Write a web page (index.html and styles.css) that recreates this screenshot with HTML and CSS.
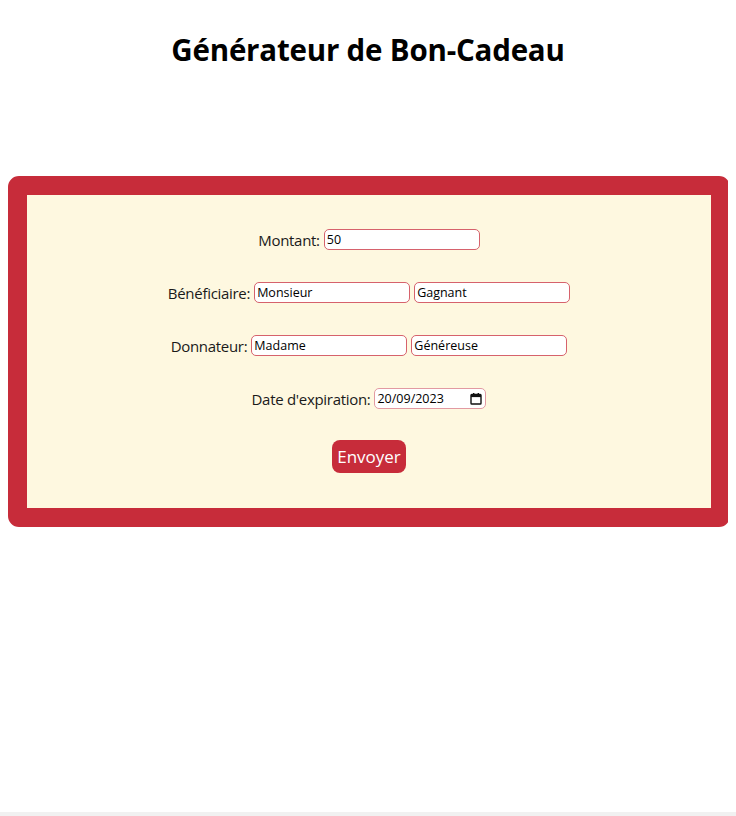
FILE: index.html
```html
<!DOCTYPE html>
<html lang="fr">
<head>
<meta charset="utf-8">
<title>Générateur de Bon-Cadeau</title>
<link rel="stylesheet" href="styles.css">
</head>
<body>
<h1 class="title">Générateur de Bon-Cadeau</h1>
<form class="voucher">
  <div class="row">
    <label class="lbl" for="montant">Montant:</label>
    <input class="field" id="montant" type="text" value="50">
  </div>
  <div class="row">
    <label class="lbl" for="ben1">Bénéficiaire:</label>
    <input class="field" id="ben1" type="text" value="Monsieur">
    <input class="field" type="text" value="Gagnant">
  </div>
  <div class="row">
    <label class="lbl" for="don1">Donnateur:</label>
    <input class="field" id="don1" type="text" value="Madame">
    <input class="field" type="text" value="Généreuse">
  </div>
  <div class="row">
    <label class="lbl" for="date">Date d'expiration:</label>
    <span class="datebox">
      <input class="datetext" id="date" type="text" value="20/09/2023">
      <svg class="cal" width="12" height="12" viewBox="0 0 12 12" aria-hidden="true">
        <rect x="1" y="1.5" width="10" height="9.5" rx="0.8" fill="none" stroke="#111" stroke-width="1.4"/>
        <rect x="1" y="1.5" width="10" height="2.6" fill="#111"/>
        <rect x="3" y="0" width="1.4" height="2" fill="#111"/>
        <rect x="7.6" y="0" width="1.4" height="2" fill="#111"/>
      </svg>
    </span>
  </div>
  <div class="row actions">
    <button class="send" type="button">Envoyer</button>
  </div>
</form>
<div class="hbar"></div>
</body>
</html>
```
FILE: styles.css
```css
html, body {
  background: #ffffff;
}
body {
  margin: 8px;
  font-family: "Open Sans", "Noto Sans", sans-serif;
  color: #111;
}
.title {
  margin: 22px 0 0;
  text-align: center;
  font-size: 29.5px;
  font-weight: 700;
  line-height: 40px;
  color: #000;
  letter-spacing: -0.2px;
}
.voucher {
  margin: 106px -2px 0 0;
  background: #fef8e0;
  border: 19px solid #c72c3a;
  border-radius: 11px;
  padding: 34px 0 35px;
  display: flex;
  flex-direction: column;
  align-items: center;
  gap: 32px;
}
.row {
  display: flex;
  align-items: center;
  justify-content: center;
  height: 21px;
  gap: 4px;
}
.lbl {
  font-size: 15px;
  color: #1a1a1a;
  letter-spacing: -0.3px;
}
.field {
  box-sizing: border-box;
  width: 156px;
  height: 21px;
  margin: 0;
  padding: 1px 2px;
  border: 1px solid #d6626c;
  border-radius: 5px;
  background: #fff;
  font-family: "Open Sans", "Noto Sans", sans-serif;
  font-size: 12.5px;
  color: #000;
  outline: none;
}
.datebox {
  box-sizing: border-box;
  width: 112px;
  height: 21px;
  display: flex;
  align-items: center;
  border: 1px solid #e29aa2;
  border-radius: 5px;
  background: #fff;
  padding: 0 3px 0 2px;
}
.datetext {
  flex: 1;
  min-width: 0;
  border: 0;
  padding: 0;
  margin: 0;
  background: transparent;
  font-family: "Open Sans", "Noto Sans", sans-serif;
  font-size: 12.5px;
  color: #000;
  outline: none;
}
.cal {
  flex: none;
}
.actions {
  height: 33px;
  margin-top: -1px;
}
.send {
  height: 33px;
  padding: 0 5px;
  border: 0;
  border-radius: 8px;
  background: #c72c3a;
  color: #fff;
  font-family: "Open Sans", "Noto Sans", sans-serif;
  font-size: 17px;
  cursor: pointer;
}
.hbar {
  position: fixed;
  left: 0;
  right: 0;
  bottom: 0;
  height: 4px;
  background: #f1f1f1;
}
```
